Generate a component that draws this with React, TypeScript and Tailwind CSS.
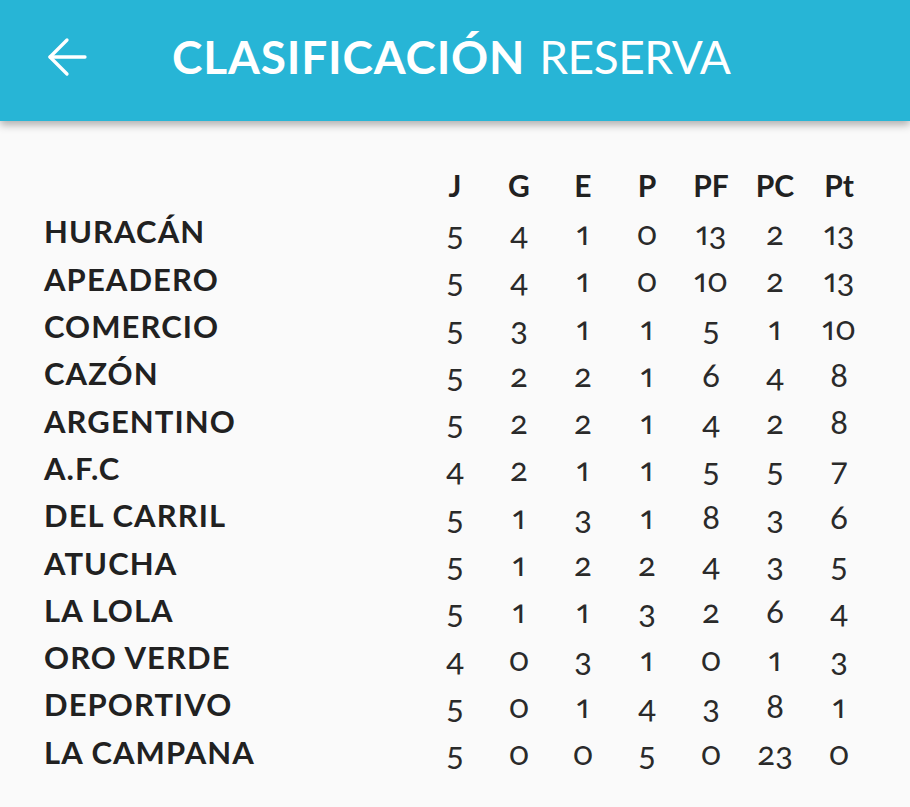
const cols = ["J", "G", "E", "P", "PF", "PC", "Pt"];

const rows: [string, number[]][] = [
  ["HURACÁN", [5, 4, 1, 0, 13, 2, 13]],
  ["APEADERO", [5, 4, 1, 0, 10, 2, 13]],
  ["COMERCIO", [5, 3, 1, 1, 5, 1, 10]],
  ["CAZÓN", [5, 2, 2, 1, 6, 4, 8]],
  ["ARGENTINO", [5, 2, 2, 1, 4, 2, 8]],
  ["A.F.C", [4, 2, 1, 1, 5, 5, 7]],
  ["DEL CARRIL", [5, 1, 3, 1, 8, 3, 6]],
  ["ATUCHA", [5, 1, 2, 2, 4, 3, 5]],
  ["LA LOLA", [5, 1, 1, 3, 2, 6, 4]],
  ["ORO VERDE", [4, 0, 3, 1, 0, 1, 3]],
  ["DEPORTIVO", [5, 0, 1, 4, 3, 8, 1]],
  ["LA CAMPANA", [5, 0, 0, 5, 0, 23, 0]],
];

export default function App() {
  return (
    <div className="w-[910px] h-[807px] bg-[#fafafa] font-['Lato',sans-serif] text-[#212121] overflow-hidden">
      <header className="relative z-10 h-[121px] bg-[#27b5d6] flex items-center shadow-[0_4px_8px_rgba(0,0,0,0.3)]">
        <div className="w-[172px] pl-[47px] flex items-center">
          <svg width="40" height="40" viewBox="0 0 40 40" fill="none" stroke="white" strokeWidth="3.3" strokeLinecap="round" strokeLinejoin="round" className="-mt-[8px]">
            <path d="M38 20H3" />
            <path d="M20 3L3 20L20 37" />
          </svg>
        </div>
        <h1 className="text-white text-[46px] leading-none -mt-[8px] whitespace-nowrap">
          <span className="font-bold tracking-[0.8px]">CLASIFICACIÓN</span>
          <span className="font-normal ml-[14px] tracking-[-0.5px]">RESERVA</span>
        </h1>
      </header>
      <main className="pt-[40px] pl-[44px]">
        <div className="grid grid-cols-[379px_repeat(7,64px)] auto-rows-[47.3px] items-center">
          <div />
          {cols.map((c) => (
            <div key={c} className="text-center font-bold text-[30px] leading-none">
              {c}
            </div>
          ))}
          {rows.map(([name, vals]) => (
            <div key={name} className="contents">
              <div className="font-bold text-[31px] leading-none tracking-[0.035em] whitespace-nowrap">{name}</div>
              {vals.map((v, i) => (
                <div
                  key={i}
                  className="text-center text-[33px] leading-none [font-variant-numeric:oldstyle-nums_proportional-nums] text-[#2a2a2a] pt-[1px]"
                >
                  {v}
                </div>
              ))}
            </div>
          ))}
        </div>
      </main>
    </div>
  );
}
